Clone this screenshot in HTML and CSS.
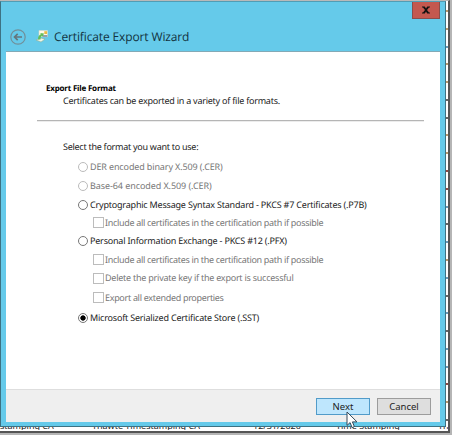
FILE: index.html
```
<!DOCTYPE html>
<html lang="en">
<head>
<meta charset="utf-8">
<title>Certificate Export Wizard</title>
<link rel="stylesheet" href="styles.css">
</head>
<body>
<div class="desktop">
  <div class="upper">
    <section class="window">
      <header class="titlebar">
        <svg class="back" viewBox="0 0 16 16"><circle cx="8" cy="8" r="7.2"/><path d="M12 8H4.7M7.7 4.8L4.5 8l3.2 3.2"/></svg>
        <svg class="cert" viewBox="0 0 14 14"><path d="M4 1.5h8.5v6.2H4z" fill="#fffbea" stroke="#d7d6c4" stroke-width=".6"/><path d="M9.3 2.2H12V5H9.3z" fill="#e9b944"/><path d="M8 6.2h4.3v1.5H8z" fill="#768a9c"/><path d="M1 11l5-2 4 1.2L6 13z" fill="#eef4e8" stroke="#8cae94" stroke-width=".6"/><path d="M3 10.5c0-3 1-4.300 3-5.500l-1-1 4 .5L7.500 8l-.7-1.300C5.500 8 5.500 9 5.500 10.500z" fill="#62bd59"/></svg>
        <h1>Certificate Export Wizard</h1>
        <button class="close" aria-label="Close"><svg viewBox="0 0 8 8"><path d="M0 .5h2.7L4 2.5 5.3.5H8v1H7L5 4l2 2.5h1v1H5.2L4 5.5l-1.200 2H0v-1h1L3 4 1 1.500H0z"/></svg></button>
      </header>
      <main class="page">
        <h2 class="t-head">Export File Format</h2>
        <p class="sub t-sub">Certificates can be exported in a variety of file formats.</p>
        <div class="rule"></div>
        <p class="prompt t-prompt">Select the format you want to use:</p>
        <div class="options">
          <label class="row r19 off"><i class="radio"></i><span class="t-der">DER encoded binary X.509 (.CER)</span></label>
          <label class="row r19 off"><i class="radio"></i><span class="t-base">Base-64 encoded X.509 (.CER)</span></label>
          <label class="row r19"><i class="radio"></i><span class="t-crypt">Cryptographic Message Syntax Standard - PKCS #7 Certificates (.P7B)</span></label>
          <label class="row r17 off child"><i class="check"></i><span class="t-inc">Include all certificates in the certification path if possible</span></label>
          <label class="row r20"><i class="radio"></i><span class="t-pers">Personal Information Exchange - PKCS #12 (.PFX)</span></label>
          <label class="row r17 off child"><i class="check"></i><span class="t-inc">Include all certificates in the certification path if possible</span></label>
          <label class="row r20 off child"><i class="check"></i><span class="t-del">Delete the private key if the export is successful</span></label>
          <label class="row r19 off child"><i class="check"></i><span class="t-exp">Export all extended properties</span></label>
          <label class="row r21"><i class="radio on"></i><span class="t-ms">Microsoft Serialized Certificate Store (.SST)</span></label>
        </div>
      </main>
      <footer class="actions">
        <button class="btn next">Next</button>
        <button class="btn">Cancel</button>
      </footer>
    </section>
    <div class="strip"><i></i><i></i><i class="b"></i><i></i><i></i><i class="d"></i><i class="d"></i><i></i><i></i><i class="r"></i><i class="r"></i><i class="b"></i><i class="d"></i><i class="b"></i><i></i><i class="b"></i><i class="d"></i><i class="b"></i><i class="d"></i><i class="b"></i><i class="b"></i><i class="r"></i><i></i><i class="d"></i></div>
  </div>
  <div class="behind"><span>stamping CA</span><span>Thawte Timestamping CA</span><span>12/31/2020</span><span>Time Stamping</span><span>Thawte</span></div>
</div>
<svg class="cursor" viewBox="0 0 12 18"><path d="M1 1v13.4l3.1-2.8 2 5 2.3-1-2-4.700H11z"/></svg>
</body>
</html>
```
FILE: styles.css
```
* { box-sizing: border-box; }
body { margin: 0; width: 452px; height: 435px; overflow: hidden; background: #fff; color: #1c1c1c; font: 9px/12px "Noto Sans", sans-serif; text-rendering: geometricPrecision; }
h1, h2, p { margin: 0; font-weight: normal; }
.desktop { width: 450px; height: 433px; border-top: 1px solid #b9b9b9; border-right: 2px solid #555; border-bottom: 2px solid #555; box-shadow: 1px 1px 1px 1px #b5b5b5; }
.upper { display: flex; height: 426px; }
.window { width: 446px; height: 426px; display: flex; flex-direction: column; background: #65caea; border: 1px solid #3d7283; border-top-color: #519db5; padding: 0 5px 4px; }
.titlebar { height: 49px; display: flex; align-items: flex-start; flex: none; }
.back { width: 16px; height: 16px; margin: 27px 0 0 4px; fill: none; stroke: #718f99; stroke-width: 1.2; }
.back path { stroke: #65767d; stroke-width: 1.7; }
.cert { width: 14px; height: 14px; margin: 27px 0 0 9px; }
h1 { font: 12px/16px "Open Sans", sans-serif; margin: 27px 0 0 5px; color: #12333f; letter-spacing: -.13px; white-space: nowrap; }
.close { margin-left: auto; width: 28px; height: 17px; border: 1px solid #8b4d4b; border-top: 0; background: #c4584f; padding: 0; display: flex; align-items: center; justify-content: center; }
.close svg { width: 8px; height: 8px; fill: #111; }
.page { flex: 1; background: #fff; border-top: 1px solid #83a9b6; padding: 31px 16px 0 31px; }
.page > *, .row span { white-space: nowrap; }
h2 { font-size: 8px; line-height: 12px; font-weight: bold; padding-left: 9px; color: #000; }
.sub { padding-left: 26px; }
.rule { height: 1px; margin-top: 13px; background: #b5b5b5; box-shadow: 0 1px #ececec; }
.prompt { padding-left: 26px; margin-top: 20px; }
.options { padding: 4px 0 0 41px; }
.row { display: flex; align-items: center; }
.r17 { height: 17px; }
.r19 { height: 19px; }
.r20 { height: 20px; }
.r21 { height: 21px; }
.off { color: #777; }
.child { padding-left: 15px; }
.radio { width: 10px; height: 10px; margin-right: 2px; border: 1px solid #777; border-radius: 50%; background: #fff; flex: none; }
.off .radio { border-color: #bbb; }
.radio.on { background: radial-gradient(circle, #000 0 2.3px, #fff 3px); }
.check { width: 11px; height: 11px; margin-right: 1px; border: 1px solid #bcbcbc; background: #fff; flex: none; }
.t-head { letter-spacing: -.2px; }
.t-sub, .t-del { letter-spacing: -.24px; }
.t-prompt { letter-spacing: -.27px; }
.t-der { letter-spacing: -.13px; }
.t-base { letter-spacing: -.08px; }
.t-crypt, .t-pers, .t-ms { letter-spacing: -.2px; }
.t-inc, .t-exp { letter-spacing: -.31px; }
.actions { height: 33px; flex: none; display: flex; align-items: center; justify-content: flex-end; gap: 7px; padding-right: 9px; background: #efefef; border-top: 1px solid #dedede; }
.btn { width: 54px; height: 17px; padding: 0; border: 1px solid #9c9c9c; background: #dedede; color: #222; font: 9.5px/13px "Noto Sans", sans-serif; }
.next { border-color: #519bc9; background: #bee6fd; }
.strip { width: 2px; display: flex; flex-direction: column; justify-content: space-between; padding: 9px 0 6px; }
.strip i { height: 2px; background: #bb9a6d; }
.strip .b { background: #6a9cba; }
.strip .r { background: #914944; }
.strip .d { background: #666; }
.behind { height: 3px; overflow: hidden; display: grid; grid-template-columns: 92px 161px 83px 102px 10px; line-height: 12px; color: #222; white-space: nowrap; }
.behind span { margin-top: -7px; overflow: hidden; }
.cursor { position: absolute; left: 346px; top: 411px; width: 12px; height: 18px; fill: #fff; stroke: #34495a; stroke-width: 1; }
```
